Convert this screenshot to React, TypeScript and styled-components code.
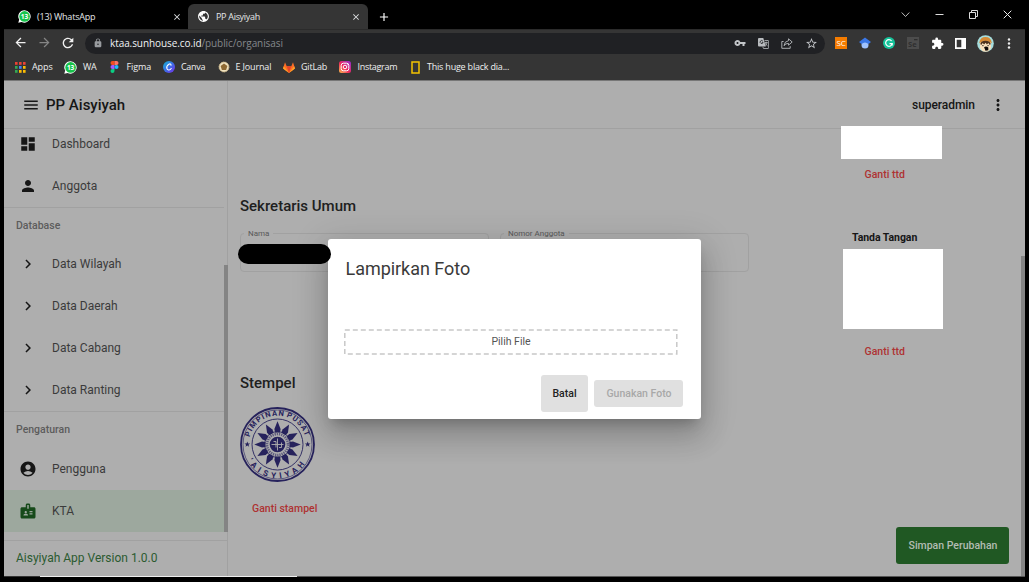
import React from "react";
import styled, { createGlobalStyle } from "styled-components";
import {
  MdMenu, MdDashboard, MdPerson, MdChevronRight, MdAccountCircle, MdBadge, MdMoreVert,
  MdExtension, MdVpnKey, MdStarBorder, MdLock, MdArrowBack, MdArrowForward, MdRefresh,
  MdPublic, MdClose, MdAdd,
} from "react-icons/md";

const ui = `"Open Sans", "Noto Sans", sans-serif`;
const line = "#a1a1a1";

const Global = createGlobalStyle`
  * { box-sizing: border-box; }
  html, body { margin: 0; background: #000; overflow: hidden; }
  svg { display: block; flex: none; }
`;

const Screen = styled.div`
  position: relative; width: 1029px; height: 582px; background: #000;
  display: flex; flex-direction: column; padding: 0 4px 5px; overflow: hidden;
  font-family: Roboto, sans-serif;
`;

/* ---------- browser chrome ---------- */
const TabStrip = styled.div`
  height: 29px; display: flex; align-items: stretch; padding-top: 4px; flex: none;
  font: 9px/25px ${ui}; color: #e4e6e8;
`;
const Tab = styled.div<{ $active?: boolean; $w: number }>`
  width: ${p => p.$w}px; display: flex; align-items: center;
  padding: 0 ${p => (p.$active ? 7 : 6)}px 0 ${p => (p.$active ? 9 : 14)}px;
  background: ${p => (p.$active ? "#353535" : "transparent")}; border-radius: 6px 6px 0 0;
`;
const TabTitle = styled.span<{ $ls?: number }>`
  flex: 1; white-space: nowrap; margin-left: 6px; letter-spacing: ${p => p.$ls ?? 0}px;
`;
const NewTab = styled.div`display: flex; align-items: center; margin-left: 9px; color: #fff;`;
const WindowButtons = styled.div`
  margin-left: auto; display: flex; align-items: center; gap: 25px; padding: 0 13px 4px 0;
`;
const Toolbar = styled.div`
  height: 25px; flex: none; background: #353535; display: flex; align-items: center;
  padding: 2px 0 0 9px; color: #f1f1f1; border-top: 1px solid #2b2b2b;
`;
const NavButtons = styled.div`display: flex; gap: 8.5px; width: 72px;`;
const UrlBar = styled.div`
  width: 740px; height: 21px; border-radius: 11px; background: #202124; display: flex; align-items: center;
  padding: 0 7px 0 8px; color: #989b9f;
`;
const Url = styled.span`
  margin-left: 7px; flex: 1; font: 10px/20px ${ui}; letter-spacing: -0.08px; color: #85888c; white-space: nowrap;
  b { font-weight: 400; color: #f1f3f4; }
`;
const UrlActions = styled.div`display: flex; gap: 12px; align-items: center; color: #c3c6c9;`;
const Extensions = styled.div`display: flex; align-items: center; margin-left: 10px; gap: 12px; color: #fff;`;
const ExtensionTail = styled.div`display: flex; align-items: center; gap: 12px; margin-left: -1px;`;
const Square = styled.span<{ $bg: string; $fg: string }>`
  width: 12px; height: 12px; background: ${p => p.$bg}; color: ${p => p.$fg}; font: 8px/12px ${ui};
  text-align: center; letter-spacing: -0.3px;
`;
const Bookmarks = styled.div`
  height: 27px; flex: none; background: #353535; border-bottom: 1px solid #777; display: flex;
  align-items: center; padding-left: 11px; font: 9px/26px ${ui}; color: #eeeff0;
`;
const Bookmark = styled.div<{ $w: number; $text: number; $ls?: number }>`
  width: ${p => p.$w}px; display: grid; grid-template-columns: ${p => p.$text}px 1fr; align-items: center;
  white-space: nowrap; letter-spacing: ${p => p.$ls ?? 0}px;
`;

/* ---------- application ---------- */
const Page = styled.div`
  flex: 1; min-height: 0; display: grid; grid-template-columns: 224px 1fr; background: #aeaeae; color: #161616;
`;
const Sidebar = styled.aside`
  border-right: 1px solid ${line}; display: flex; flex-direction: column; min-height: 0;
`;
const Brand = styled.div`
  height: 48px; flex: none; border-bottom: 1px solid ${line}; display: flex; align-items: center; gap: 6px;
  padding-left: 18px; font-weight: 500; font-size: 15px; letter-spacing: 0;
`;
const ScrollArea = styled.div`
  height: 411px; flex: none; overflow: hidden; display: grid; grid-template-columns: 1fr 4px; margin-right: -1px;
`;
const NavList = styled.nav`margin-top: -6px;`;
const NavItem = styled.div<{ $on?: boolean }>`
  height: 42px; display: grid; grid-template-columns: 33px 1fr; align-items: center; padding-left: 15px;
  background: ${p => (p.$on ? "#9da89e" : "transparent")}; font-size: 12px; letter-spacing: 0; color: #3b3b3b;
  svg { color: ${p => (p.$on ? "#164a1a" : "#161616")}; }
`;
const Subheader = styled.div<{ $h: number }>`
  height: ${p => p.$h}px; line-height: 35px; border-top: 1px solid ${line}; padding-left: 12px;
  font-size: 10.5px; letter-spacing: 0; color: #5c5c5c; font-weight: 500;
`;
const Thumb = styled.div<{ $top: number; $h: number }>`
  margin-top: ${p => p.$top}px; height: ${p => p.$h}px; background: #848484;
`;
const Footer = styled.div`
  border-top: 1px solid ${line}; flex: 1; padding-left: 12px; font-size: 12px; line-height: 35px;
  letter-spacing: 0; color: #2b5b30;
`;
const Main = styled.main`display: flex; flex-direction: column; min-width: 0;`;
const AppBar = styled.header`
  height: 48px; flex: none; border-bottom: 1px solid ${line}; display: flex; align-items: center;
  justify-content: flex-end; gap: 14px; padding-right: 18px; font-size: 12px; font-weight: 500; letter-spacing: -0.05px;
`;
const Content = styled.div`
  flex: 1; display: grid; grid-template-columns: 509px 1fr 4px; padding-left: 12px; min-height: 0;
`;
const FormColumn = styled.div`padding-top: 66px; display: flex; flex-direction: column; align-items: flex-start;`;
const Heading = styled.h2`
  margin: 0; font-size: 15px; line-height: 22px; font-weight: 500; letter-spacing: 0; color: #202020;
`;
const FieldRow = styled.div`display: flex; gap: 11px; width: 509px; margin: 11px 0 100px;`;
const Field = styled.fieldset`
  flex: 1; height: 44px; margin: 0; padding: 0 3px; border: 1px solid ${line}; border-radius: 4px; min-width: 0;
  legend { padding: 1px 4px 0; font-size: 8px; line-height: 10px; color: #585858; letter-spacing: 0; }
`;
const TextLink = styled.div<{ $mt: number; $ml: number }>`
  margin: ${p => p.$mt}px 0 0 ${p => p.$ml}px; font-size: 10.5px; line-height: 14px; font-weight: 500;
  color: #ae3232; letter-spacing: 0; white-space: nowrap;
`;
const SignatureColumn = styled.div`display: flex; flex-direction: column; align-items: flex-start; padding-left: 92px;`;
const Blank = styled.div<{ $w: number; $h: number; $mt: number; $ml: number }>`
  width: ${p => p.$w}px; height: ${p => p.$h}px; margin: ${p => p.$mt}px 0 0 ${p => p.$ml}px; background: #fff;
  flex: none; z-index: 1;
`;
const Caption = styled.div`
  margin: 49px 0 0 11px; font-size: 10.5px; line-height: 14px; font-weight: 700; letter-spacing: -0.05px; white-space: nowrap;
`;
const SaveButton = styled.button`
  margin: auto 12px 12px auto; width: 113px; height: 37px; border: 0; border-radius: 3px; background: #205823;
  color: #b3bdb3; font: 500 10.5px Roboto, sans-serif; letter-spacing: 0; padding: 0 0 0 1px; white-space: nowrap;
`;

/* ---------- dialog ---------- */
const Dialog = styled.div`
  position: absolute; left: 328px; top: 239px; width: 373px; height: 180px; border-radius: 3px; background: #fff;
  padding: 17px 18px 7px 16px; display: flex; flex-direction: column; z-index: 2;
  box-shadow: 0 8px 11px -5px rgba(0,0,0,.2), 0 18px 28px 2px rgba(0,0,0,.14), 0 7px 34px 6px rgba(0,0,0,.12);
`;
const DialogTitle = styled.div`
  font-size: 18px; line-height: 26px; color: #3a3a3a; padding-left: 1.5px; letter-spacing: -0.04px;
`;
const FilePicker = styled.svg`margin: 0;`;
const Picker = styled.div`
  margin: 47px 5px 0 0; width: 334px; height: 26px; display: grid; color: #555;
  font-size: 10.5px; letter-spacing: 0;
  > * { grid-area: 1 / 1; }
  > span { text-align: center; line-height: 25px; }
`;
const Actions = styled.div`display: flex; align-items: center; justify-content: flex-end; gap: 6px; margin-top: 20px;`;
const ActionButton = styled.button<{ $w: number; $h: number; $muted?: boolean }>`
  width: ${p => p.$w}px; height: ${p => p.$h}px; border: 0; border-radius: 3px; background: #e0e0e0;
  padding: 0 0 0 ${p => (p.$muted ? 1 : 0)}px;
  font: 500 10.5px Roboto, sans-serif; letter-spacing: 0; color: ${p => (p.$muted ? "#a8a8a8" : "#222")};
`;
const Redaction = styled.div`
  position: absolute; left: 238px; top: 244px; width: 93px; height: 20px; border-radius: 10px; background: #000; z-index: 3;
`;
const Taskline = styled.div`
  height: 1px; flex: none; display: grid; grid-template-columns: 36px 257px 1fr; background: #555;
  > :nth-child(1) { background: #333; }
  > :nth-child(2) { background: #eee; }
`;
const StampArt = styled.svg`margin-top: 13px;`;

const WhatsApp = () => (
  <svg width="13" height="13" viewBox="0 0 13 13">
    <path d="M6.6 .2a6.2 6.2 0 1 1-3 11.7L.3 12.7 1.2 9.6A6.2 6.2 0 0 1 6.6 .2Z" fill="#fff" />
    <circle cx="6.6" cy="6.4" r="5.3" fill="#17c34b" />
    <text x="6.5" y="8.9" fontSize="6.5" fontWeight="700" fill="#fff" textAnchor="middle" fontFamily="Open Sans">13</text>
  </svg>
);
const AppsIcon = () => (
  <svg width="11" height="11" viewBox="0 0 11 11">
    {["#ea4335", "#ea4335", "#ea4335", "#34a853", "#4285f4", "#fbbc04", "#34a853", "#fbbc04", "#fbbc04"].map((c, i) => (
      <rect key={i} x={(i % 3) * 4} y={Math.floor(i / 3) * 4} width="2.6" height="2.8" fill={c} />
    ))}
  </svg>
);
const Figma = () => (
  <svg width="9" height="12" viewBox="0 0 8 12">
    <path d="M2 0h2v4H2a2 2 0 0 1 0-4Z" fill="#f24e1e" /><path d="M4 0h2a2 2 0 0 1 0 4H4Z" fill="#ff7262" />
    <path d="M2 4h2v4H2a2 2 0 0 1 0-4Z" fill="#a259ff" /><circle cx="6" cy="6" r="2" fill="#1abcfe" />
    <path d="M2 8h2v2a2 2 0 1 1-2-2Z" fill="#0acf83" />
  </svg>
);
const Canva = () => (
  <svg width="12" height="12" viewBox="0 0 12 12">
    <defs><linearGradient id="canva" x1="0" y1="0" x2="1" y2="1"><stop stopColor="#15b9d4" /><stop offset=".5" stopColor="#3b6ee8" /><stop offset="1" stopColor="#7a2be8" /></linearGradient></defs>
    <circle cx="6" cy="6" r="6" fill="url(#canva)" />
    <path d="M8 4.300C8.200 2.900 6.900 2.500 5.800 3.300 4.200 4.400 3.400 6.400 4 7.900 4.700 9.600 7 9.300 8.200 7.500" fill="none" stroke="#fff" strokeWidth="1.100" strokeLinecap="round" />
  </svg>
);
const Journal = () => (
  <svg width="12" height="12" viewBox="0 0 12 12">
    <circle cx="6" cy="6" r="4.900" fill="#f0e3c0" stroke="#d8c08e" strokeWidth="1" strokeDasharray="1.600 .5" />
    <path d="m6 2.600 3.400 2.500-1.300 3.900H3.900L2.600 5.100Z" fill="#8f6a33" />
  </svg>
);
const GitLab = () => (
  <svg width="12" height="11" viewBox="0 0 12 11">
    <path d="M6 11 0 6.500 2 .3 3.700 4.300h4.600L10 .3l2 6.200Z" fill="#fc6d26" />
    <path d="M6 11 3.700 4.300h4.600Z" fill="#e24329" /><path d="M6 11 0 6.500l.8-2.200Zm0 0 6-4.500-.8-2.200Z" fill="#fca326" />
  </svg>
);
const Instagram = () => (
  <svg width="12" height="12" viewBox="0 0 12 12">
    <defs><linearGradient id="insta" x1="0" y1="1" x2="1" y2="0"><stop stopColor="#fdc14b" /><stop offset=".45" stopColor="#ee2a5b" /><stop offset="1" stopColor="#8f30d6" /></linearGradient></defs>
    <rect width="12" height="12" rx="2.500" fill="url(#insta)" />
    <rect x="2.200" y="2.200" width="7.600" height="7.600" rx="2.200" fill="none" stroke="#fff" />
    <circle cx="6" cy="6" r="1.800" fill="none" stroke="#fff" /><circle cx="8.300" cy="3.800" r=".5" fill="#fff" />
  </svg>
);
const YellowBox = () => (
  <svg width="9" height="13" viewBox="0 0 9 13"><rect x="1" y="1" width="7" height="11" fill="none" stroke="#f5c400" strokeWidth="1.500" /></svg>
);
const Translate = () => (
  <svg width="11" height="11" viewBox="0 0 11 11">
    <path d="M0 1Q0 0 1 0h4.300l2.500 8.500H1q-1 0-1-1Z" fill="#b9bcbf" />
    <path d="M6.500 2.500H10q.6 0 .6.600v6.800q0 .6-.6.600H5.500l-.7-1.700M6.800 4.500h2.800M8.200 3.700v.8M7.300 5.200q.8 2 2.200 2.600M9.100 4.600Q8.700 6.500 7.400 7.500" fill="none" stroke="#b9bcbf" strokeWidth=".8" />
    <path d="M4.900 3.200a1.500 1.500 0 1 0 .2 1.200H3.800" fill="none" stroke="#202124" strokeWidth=".8" />
  </svg>
);
const Share = () => (
  <svg width="12" height="11" viewBox="0 0 12 11" fill="none" stroke="#b9bcbf" strokeWidth=".9" strokeLinejoin="round">
    <path d="M2.600 3.500H.8v6.800h8.400V8.200" /><path d="M7.500 .8 11.200 4 7.500 7.200V5.400Q4.600 5.300 3 7.700 3.500 3.200 7.500 2.700Z" />
  </svg>
);
const Scholar = () => (
  <svg width="12" height="12" viewBox="0 0 12 12">
    <circle cx="6" cy="7.900" r="3.500" fill="#a0c3ff" /><path d="M6 .5 12 5 9.500 7Q6 4 2.500 7L0 5Z" fill="#3b78e7" />
  </svg>
);
const Grammarly = () => (
  <svg width="12" height="12" viewBox="0 0 12 12">
    <circle cx="6" cy="6" r="6" fill="#15c39a" />
    <path d="M8.600 4A3.300 3.300 0 1 0 9.200 6.600H6.500M9.200 6.600V8.400" fill="none" stroke="#fff" strokeWidth="1.200" />
  </svg>
);
const Selenium = () => (
  <svg width="12" height="12" viewBox="0 0 12 12">
    <rect width="12" height="12" fill="#4c4c4c" /><rect x="7" y="2.200" width="3.500" height="1" fill="#272727" />
    <text x="1" y="9.800" fontSize="7.500" fontWeight="700" fontFamily="Open Sans" fill="#303030">Se</text>
  </svg>
);
const Avatar = () => (
  <svg width="17" height="17" viewBox="0 0 18 18">
    <defs><clipPath id="face"><circle cx="9" cy="9" r="8.800" /></clipPath></defs>
    <g clipPath="url(#face)">
      <rect width="18" height="18" fill="#a5dcdc" />
      <path d="M2.500 8Q3 2 9 2t6.500 6l-1.500 2H4Z" fill="#d58a35" />
      <path d="M3.500 8Q9 4.500 14.500 8l.5 5.500-3.500 4.500h-5L3 13.500Z" fill="#f8e0bd" />
      <path d="M3.500 9.500Q4.500 6 9 6t5.500 3.500l-1 1-1.500-2-1.500 1.500L9.200 8.200 7.500 10 6 8.500 4.500 10.500Z" fill="#4b301c" />
      <path d="M5.500 11.300h1.500M11 11.300h1.500" stroke="#2b2018" /><path d="M7.500 13q2-1.500 4.500.2v3l-3 .5Z" fill="#0d0908" />
    </g>
  </svg>
);

const rays = Array.from({ length: 12 }, (_, i) => i * 30);
const Stamp = () => (
  <StampArt width="75" height="75" viewBox="0 0 75 75" fill="none" stroke="#26225c">
    <defs>
      <path id="arcTop" d="M9.700 44.950a28.800 28.800 0 1 1 55.600 0" />
      <path id="arcBottom" d="M3.700 37.500a33.800 33.800 0 0 0 67.600 0" />
    </defs>
    <circle cx="37.500" cy="37.500" r="36.500" strokeWidth="1.800" />
    <circle cx="37.500" cy="37.500" r="34.500" strokeWidth=".6" />
    <circle cx="37.500" cy="37.500" r="25.500" strokeWidth=".9" />
    <g fill="#26225c" stroke="none">
      {rays.map(a => <path key={a} d="M37.500 14.300 40.600 22 40 25.500H35L34.400 22Z" transform={`rotate(${a} 37.500 37.500)`} />)}
      <path d="m7.300 34.500.8 1.900h2l-1.600 1.300.6 2-1.800-1.200-1.800 1.200.6-2-1.600-1.300h2Z" />
      <path d="m67.700 34.500.8 1.900h2l-1.600 1.300.6 2-1.800-1.200-1.800 1.200.6-2-1.600-1.300h2Z" />
      <circle cx="37.500" cy="37.500" r="7.800" />
    </g>
    <circle cx="37.500" cy="37.500" r="13" strokeWidth=".8" />
    <circle cx="37.500" cy="37.500" r="10.500" strokeWidth="2.600" strokeDasharray="1.300 .9" opacity=".6" />
    <path d="M37.500 31.500v12M31.500 37.500h12M33.500 34.500h2.500v6M39 40.500h2.500v-5" stroke="#aeaeae" strokeWidth=".9" />
    <g fill="#26225c" stroke="none" fontFamily="Roboto, sans-serif" fontWeight="700">
      <text fontSize="7.500" textAnchor="middle" letterSpacing="1.100" wordSpacing="-1.500"><textPath href="#arcTop" startOffset="50%">PIMPINAN PUSAT</textPath></text>
      <text fontSize="8" textAnchor="middle" letterSpacing="4"><textPath href="#arcBottom" startOffset="50%">'AISYIYAH</textPath></text>
    </g>
  </StampArt>
);

const menu = ["Data Wilayah", "Data Daerah", "Data Cabang", "Data Ranting"];

export default function App() {
  return (
    <Screen>
      <Global />
      <TabStrip>
        <Tab $w={184}><WhatsApp /><TabTitle $ls={-0.2}>(13) WhatsApp</TabTitle><MdClose size={10} /></Tab>
        <Tab $w={180} $active><MdPublic size={13} color="#fff" /><TabTitle $ls={-0.3}>PP Aisyiyah</TabTitle><MdClose size={10} /></Tab>
        <NewTab><MdAdd size={14} /></NewTab>
        <WindowButtons>
          <svg width="9" height="9" viewBox="0 0 9 9" fill="none" stroke="#bbb"><path d="m.7 2.500 3.800 4 3.800-4" /></svg>
          <svg width="9" height="9" viewBox="0 0 9 9" stroke="#ddd"><path d="M.5 4.500h8" /></svg>
          <svg width="9" height="9" viewBox="0 0 9 9" fill="none" stroke="#ddd"><path d="M.5 2.500h6v6h-6ZM2.500 2.500v-2h6v6h-2" /></svg>
          <svg width="9" height="9" viewBox="0 0 9 9" stroke="#eee"><path d="m.7.7 7.600 7.600M8.300.7.7 8.300" /></svg>
        </WindowButtons>
      </TabStrip>
      <Toolbar>
        <NavButtons>
          <MdArrowBack size={15} /><MdArrowForward size={15} color="#858585" /><MdRefresh size={16} />
        </NavButtons>
        <UrlBar>
          <MdLock size={10} />
          <Url><b>ktaa.sunhouse.co.id</b>/public/organisasi</Url>
          <UrlActions><MdVpnKey size={12} /><Translate /><Share /><MdStarBorder size={13} /></UrlActions>
        </UrlBar>
        <Extensions>
          <Square $bg="#f57c00" $fg="#fff">SC</Square>
          <Scholar /><Grammarly /><Selenium /><MdExtension size={13} />
          <ExtensionTail>
            <svg width="11" height="11" viewBox="0 0 11 11"><path fillRule="evenodd" d="M0 0h11v11H0ZM1.700 1.700v7.600h4.600V1.700Z" fill="#fff" /></svg>
          </ExtensionTail>
          <ExtensionTail>
            <Avatar />
            <svg width="11" height="11" viewBox="0 0 11 11" fill="#eee"><circle cx="3" cy="1.500" r="1.200" /><circle cx="3" cy="5.500" r="1.200" /><circle cx="3" cy="9.500" r="1.200" /></svg>
          </ExtensionTail>
        </Extensions>
      </Toolbar>
      <Bookmarks>
        <Bookmark $w={49} $text={17} $ls={-0.1}><AppsIcon />Apps</Bookmark>
        <Bookmark $w={46} $text={19} $ls={-0.3}><WhatsApp />WA</Bookmark>
        <Bookmark $w={53} $text={16.5} $ls={-0.12}><Figma />Figma</Bookmark>
        <Bookmark $w={55} $text={18} $ls={-0.3}><Canva />Canva</Bookmark>
        <Bookmark $w={65} $text={17.5} $ls={-0.15}><Journal />E Journal</Bookmark>
        <Bookmark $w={56} $text={18} $ls={-0.2}><GitLab />GitLab</Bookmark>
        <Bookmark $w={71.5} $text={18.5} $ls={-0.3}><Instagram />Instagram</Bookmark>
        <Bookmark $w={110} $text={16.5} $ls={-0.21}><YellowBox />This huge black dia...</Bookmark>
      </Bookmarks>
      <Page>
        <Sidebar>
          <Brand><MdMenu size={18} />PP Aisyiyah</Brand>
          <ScrollArea>
            <NavList>
              <NavItem><MdDashboard size={18} />Dashboard</NavItem>
              <NavItem><MdPerson size={18} />Anggota</NavItem>
              <Subheader $h={36}>Database</Subheader>
              {menu.map(m => <NavItem key={m}><MdChevronRight size={18} />{m}</NavItem>)}
              <Subheader $h={37}>Pengaturan</Subheader>
              <NavItem><MdAccountCircle size={18} />Pengguna</NavItem>
              <NavItem $on><MdBadge size={18} />KTA</NavItem>
            </NavList>
            <Thumb $top={136} $h={267} />
          </ScrollArea>
          <Footer>Aisyiyah App Version 1.0.0</Footer>
        </Sidebar>
        <Main>
          <AppBar>superadmin<MdMoreVert size={18} /></AppBar>
          <Content>
            <FormColumn>
              <Heading>Sekretaris Umum</Heading>
              <FieldRow>
                <Field><legend>Nama</legend></Field>
                <Field><legend>Nomor Anggota</legend></Field>
              </FieldRow>
              <Heading>Stempel</Heading>
              <Stamp />
              <TextLink $mt={19.5} $ml={12}>Ganti stampel</TextLink>
            </FormColumn>
            <SignatureColumn>
              <Blank $w={101} $h={33} $mt={-3} $ml={0} />
              <TextLink $mt={9} $ml={23.5}>Ganti ttd</TextLink>
              <Caption>Tanda Tangan</Caption>
              <Blank $w={100} $h={80} $mt={4} $ml={2} />
              <TextLink $mt={16} $ml={23.5}>Ganti ttd</TextLink>
              <SaveButton>Simpan Perubahan</SaveButton>
            </SignatureColumn>
            <Thumb $top={127} $h={320} />
          </Content>
        </Main>
      </Page>
      <Taskline><span /><span /></Taskline>
      <Dialog role="dialog">
        <DialogTitle>Lampirkan Foto</DialogTitle>
        <Picker>
          <FilePicker width="334" height="26"><rect x=".8" y="1" width="332" height="24" fill="none" stroke="#c8c8c8" strokeWidth="1.500" strokeDasharray="5 3" /></FilePicker>
          <span>Pilih File</span>
        </Picker>
        <Actions>
          <ActionButton $w={47} $h={37}>Batal</ActionButton>
          <ActionButton $w={89} $h={27} $muted>Gunakan Foto</ActionButton>
        </Actions>
      </Dialog>
      <Redaction />
    </Screen>
  );
}
